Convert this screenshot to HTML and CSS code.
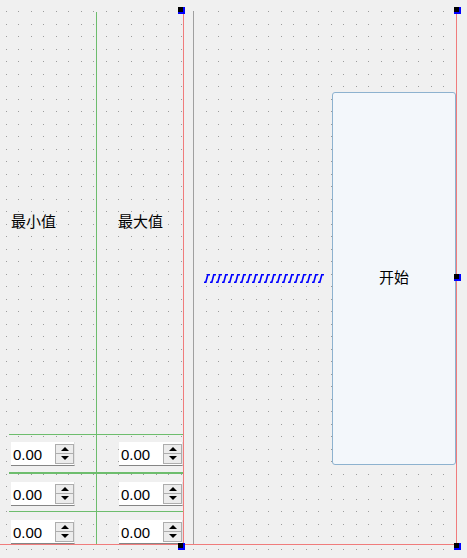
FILE: index.html
```html
<!DOCTYPE html>
<html lang="zh">
<head>
<meta charset="utf-8">
<title>Form</title>
<link rel="stylesheet" href="styles.css">
</head>
<body>
<div class="hbox">
  <div class="grid">
    <div class="label-row">
      <div class="cell c1"><span class="lbl">最小值</span></div>
      <div class="cell c2"><span class="lbl">最大值</span></div>
    </div>
    <div class="spin-row r1">
      <div class="cell c1"><div class="spin"><span class="val">0.00</span><div class="arrows"><div class="ab"><i class="up"></i></div><div class="ab"><i class="dn"></i></div></div></div></div>
      <div class="cell c2"><div class="spin"><span class="val">0.00</span><div class="arrows"><div class="ab"><i class="up"></i></div><div class="ab"><i class="dn"></i></div></div></div></div>
    </div>
    <div class="spin-row r2">
      <div class="cell c1"><div class="spin"><span class="val">0.00</span><div class="arrows"><div class="ab"><i class="up"></i></div><div class="ab"><i class="dn"></i></div></div></div></div>
      <div class="cell c2"><div class="spin"><span class="val">0.00</span><div class="arrows"><div class="ab"><i class="up"></i></div><div class="ab"><i class="dn"></i></div></div></div></div>
    </div>
    <div class="spin-row r3">
      <div class="cell c1"><div class="spin"><span class="val">0.00</span><div class="arrows"><div class="ab"><i class="up"></i></div><div class="ab"><i class="dn"></i></div></div></div></div>
      <div class="cell c2"><div class="spin"><span class="val">0.00</span><div class="arrows"><div class="ab"><i class="up"></i></div><div class="ab"><i class="dn"></i></div></div></div></div>
    </div>
  </div>
  <div class="vline"></div>
  <div class="spacer-wrap">
    <svg class="spacer" width="120" height="9" viewBox="0 0 120 9">
      <defs>
        <pattern id="zz" width="6" height="9" patternUnits="userSpaceOnUse">
          <path d="M0 8.3 H1.8 L3.8 0.7 H6" fill="none" stroke="#0000ff" stroke-width="1.6"/>
        </pattern>
      </defs>
      <rect x="0" y="0" width="120" height="9" fill="url(#zz)"/>
    </svg>
  </div>
  <button class="btn"><span class="btn-text">开始</span></button>
</div>
<div class="handle h-tl"></div>
<div class="handle h-tr"></div>
<div class="handle h-rm"></div>
<div class="handle h-br"></div>
<div class="handle h-bl"></div>
</body>
</html>
```

FILE: styles.css
```css
* { box-sizing: border-box; }
html, body { margin: 0; padding: 0; }
body {
  width: 467px;
  height: 558px;
  overflow: hidden;
  position: relative;
  background-color: #f0f0f0;
  background-image: url("data:image/svg+xml,%3Csvg xmlns='http://www.w3.org/2000/svg' width='25' height='25'%3E%3Cg fill='%239c9c9c'%3E%3Crect x='0' y='0' width='1' height='1'/%3E%3Crect x='12' y='0' width='1' height='1'/%3E%3Crect x='0' y='13' width='1' height='1'/%3E%3Crect x='12' y='13' width='1' height='1'/%3E%3C/g%3E%3C/svg%3E");
  background-position: 6px 11px;
  background-repeat: repeat;
  font-family: "Noto Sans CJK SC", sans-serif;
  color: #000;
}

.hbox {
  display: flex;
  margin-top: 12px;
  width: 457px;
  height: 533px;
  border-right: 1px solid #f07c7c;
  border-bottom: 1px solid #f07c7c;
}

.grid {
  width: 184px;
  flex: none;
  border-right: 1px solid #f07c7c;
  display: flex;
  flex-direction: column;
}

.label-row {
  height: 422px;
  display: flex;
}
.label-row .cell { display: flex; align-items: center; padding-bottom: 5px; }
.label-row .c1 { width: 96px; padding-left: 11px; }
.label-row .c2 { flex: 1; border-left: 1px solid #6dbd6d; padding-left: 21px; }
.lbl { font-size: 15px; line-height: 18px; }

.spin-row {
  display: flex;
  margin-left: 9px;
  border-top: 1px solid #6dbd6d;
}
.spin-row .cell { display: flex; align-items: flex-start; }
.spin-row .c1 { width: 87px; padding-left: 2px; }
.spin-row .c2 { flex: 1; border-left: 1px solid #6dbd6d; padding-left: 22px; }
.r1 { height: 38px; }
.r1 .cell { padding-top: 7px; }
.r2 { height: 39px; border-top-width: 2px; }
.r2 .cell { padding-top: 8px; }
.r3 { height: 33px; }
.r3 .cell { padding-top: 8px; }

.spin {
  width: 64px;
  height: 24px;
  background: #fff;
  border-bottom: 1px solid #858585;
  border-right: 1px solid #e2e2e2;
  display: flex;
  align-items: center;
  padding-left: 2px;
}
.val {
  font-family: "Liberation Sans", Arial, sans-serif;
  font-size: 15px;
  line-height: 17px;
  margin-top: 1px;
}
.arrows {
  margin-left: auto;
  width: 19px;
  height: 20px;
  display: flex;
  flex-direction: column;
}
.ab {
  flex: 1;
  border: 1px solid #adadad;
  background: #ececec;
  display: flex;
  align-items: center;
  justify-content: center;
}
.ab + .ab { border-top: none; }
.up {
  width: 0; height: 0;
  border-left: 4px solid transparent;
  border-right: 4px solid transparent;
  border-bottom: 4px solid #000;
}
.dn {
  width: 0; height: 0;
  border-left: 4px solid transparent;
  border-right: 4px solid transparent;
  border-top: 4px solid #000;
}

.vline {
  flex: none;
  width: 1px;
  margin-left: 9px;
  background: #a0a0a0;
}

.spacer-wrap {
  flex: 1;
  display: flex;
  align-items: center;
  padding-left: 10px;
}
.spacer { display: block; }

.btn {
  flex: none;
  align-self: center;
  width: 124px;
  height: 373px;
  border: 1px solid #8db2cf;
  border-radius: 3px;
  background: #f3f7fb;
  font-family: "Noto Sans CJK SC", sans-serif;
  font-size: 15px;
  color: #000;
  padding: 0 0 3px 0;
}
.btn-text { line-height: 18px; }

.handle {
  position: absolute;
  width: 7px;
  height: 7px;
  background: #000;
  border-right: 2px solid #0000ff;
  border-bottom: 2px solid #0000ff;
}
.h-tl { left: 178px; top: 7px; }
.h-tr { left: 454px; top: 7px; }
.h-rm { left: 454px; top: 274px; }
.h-br { left: 454px; top: 543px; }
.h-bl { left: 178px; top: 543px; }
```
